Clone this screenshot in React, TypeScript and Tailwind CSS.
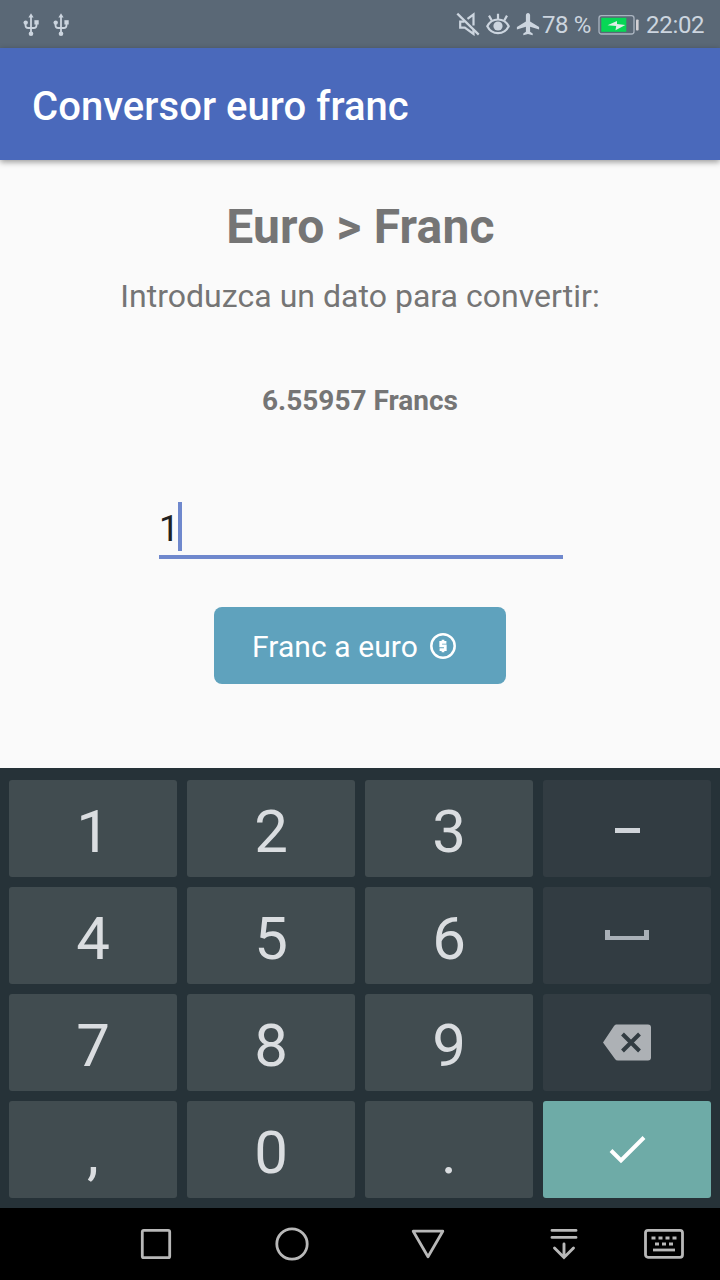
import React from 'react';
import { clsx } from 'clsx';

function UsbIcon() {
  return (
    <svg className="h-6 w-4" viewBox="0 0 16 24" fill="none" stroke="currentColor" strokeWidth="1.8">
      <path d="M8 4v16" />
      <path d="M2.500 11v2.200q0 2.800 2.800 2.800h5.400q2.800 0 2.800-2.800V11" />
      <path d="M8 1.200l2.600 4.400H5.400z" fill="currentColor" stroke="none" />
      <circle cx="2.700" cy="10.600" r="2.200" fill="currentColor" stroke="none" />
      <rect x="11.400" y="8.200" width="4.300" height="4.300" fill="currentColor" stroke="none" />
      <circle cx="8" cy="21.700" r="2.300" fill="currentColor" stroke="none" />
    </svg>
  );
}

function MuteIcon() {
  return (
    <svg className="h-6 w-6" viewBox="0 0 24 24" fill="none" stroke="currentColor" strokeWidth="2.2">
      <path d="M1.300 1.600l21.400 21" />
      <path d="M8.500 9.700H4.200v6h4.600l8.700 6.300v-4.600" />
      <path d="M11.500 6.800l6-4.300v11" />
    </svg>
  );
}

function EyeIcon() {
  return (
    <svg className="h-6 w-6" viewBox="0 0 24 24" fill="none" stroke="currentColor" strokeWidth="2.2">
      <path d="M1.300 14.300C3.500 9.800 7.500 7.500 12 7.500s8.500 2.300 10.700 6.800c-2.200 4.400-6.200 6.900-10.700 6.900S3.500 18.700 1.300 14.300z" />
      <circle cx="12" cy="14" r="4.600" fill="currentColor" stroke="none" />
      <path d="M12 1.700v5.300M3 3.600l2.600 4.600M21 3.600l-2.600 4.600" />
    </svg>
  );
}

function PlaneIcon() {
  return (
    <svg className="h-6 w-6" viewBox="0 0 24 24" fill="currentColor">
      <path d="M12 1c1.300 0 2.100 1 2.100 2.300v6.200l9 5.600v2.400l-9-2.800v5l2.600 1.900V23.300L12 22l-4.700 1.300v-1.700l2.600-1.900v-5l-9 2.800v-2.400l9-5.600V3.300C9.900 2 10.700 1 12 1z" />
    </svg>
  );
}

function BatteryIcon() {
  return (
    <svg className="h-6 w-[42px]" viewBox="0 0 42 24" fill="none">
      <rect x="1" y="3.600" width="35" height="18.400" rx="2.500" stroke="#aab4c0" strokeWidth="1.300" />
      <rect x="3.300" y="5.800" width="25" height="14" fill="#06d755" />
      <path d="M9.500 13.200L19 9v2.900l8.300 1.100-9.800 5.200.7-4.300z" fill="#dcefe6" />
      <rect x="38" y="7.500" width="2.600" height="11" rx="0.800" fill="#d3d0d4" />
    </svg>
  );
}

function StatusBar() {
  return (
    <div className="flex h-12 items-center bg-[#5a6876] text-[#ccd5df]">
      <div className="flex gap-3.5 pl-[23px]">
        <UsbIcon />
        <UsbIcon />
      </div>
      <div className="ml-auto flex items-center pr-[15px] text-2xl">
        <MuteIcon />
        <span className="ml-1.5 flex"><EyeIcon /></span>
        <span className="ml-1.5 flex"><PlaneIcon /></span>
        <span className="ml-0.5 w-[56px] pt-0.5 tracking-[-0.4px] whitespace-nowrap">78 %</span>
        <BatteryIcon />
        <span className="ml-1.5 w-[59px] pt-0.5 tracking-[-0.3px]">22:02</span>
      </div>
    </div>
  );
}

function DollarIcon() {
  return (
    <svg className="h-7 w-7" viewBox="0 0 28 28" fill="none" stroke="currentColor">
      <circle cx="14" cy="14" r="11.700" strokeWidth="2.500" />
      <path d="M17.400 10.400h-5.700v3.400h4.600v3.800h-5.700M14 7.700v2.700M14 17.600v2.700" strokeWidth="2.700" />
    </svg>
  );
}

function Converter() {
  return (
    <main className="flex h-[608px] flex-col items-center bg-[#fafafa] text-[#757575]">
      <h2 className="mt-[39px] ml-px text-5xl leading-[56px] font-bold tracking-[0.2px]">Euro &gt; Franc</h2>
      <p className="mt-[22px] text-[32px] leading-[38px] tracking-[0.03px]">Introduzca un dato para convertir:</p>
      <p className="mt-[70px] text-[28px] leading-8 font-bold">6.55957 Francs</p>
      <div className="mt-[85px] ml-0.5 flex h-[57px] w-[404px] items-start border-b-4 border-[#6f88cd] text-[36px] leading-[55px] text-[#212121]">
        <span className="w-[19px]">1</span>
        <span className="h-[49px] w-1 bg-[#6f88cd]" />
      </div>
      <button className="mt-12 flex h-[77px] w-[292px] items-center rounded-lg bg-[#5fa2bd] pl-[38px] text-[30px] text-white">
        <span className="pt-0.5 tracking-[0.08px]">Franc a euro</span>
        <span className="ml-[11px]"><DollarIcon /></span>
      </button>
    </main>
  );
}

function SpaceIcon() {
  return (
    <svg className="h-12 w-12 text-[#a9b0b7]" viewBox="0 0 48 48" fill="currentColor">
      <path d="M2 18h5v6h34v-6h5v10H2z" />
    </svg>
  );
}

function BackspaceIcon() {
  return (
    <svg className="h-12 w-12" viewBox="0 0 48 48">
      <path d="M13 5.500h32a3 3 0 0 1 3 3v30a3 3 0 0 1-3 3H15q-2 0-3-1.500L0 23.500 11 7q1-1.500 2-1.500z" fill="#adb1b5" />
      <path d="M19.500 15l17 17M36.500 15l-17 17" stroke="#323c42" strokeWidth="4" />
    </svg>
  );
}

function CheckIcon() {
  return (
    <svg className="h-12 w-12 text-white" viewBox="0 0 48 48" fill="none" stroke="currentColor" strokeWidth="4">
      <path d="M8 24.500l10 10 23-23" />
    </svg>
  );
}

interface KeyProps {
  label: string;
  children: React.ReactNode;
}

function Key({ label, children }: KeyProps) {
  const isAction = ['minus', 'space', 'delete'].includes(label);
  return (
    <button
      aria-label={label}
      className={clsx(
        'flex items-center justify-center rounded-[3px] text-6xl text-[#dadde0]',
        isAction && 'bg-[#323c42]',
        label === 'enter' && 'bg-[#6eaba7]',
        !isAction && label !== 'enter' && 'bg-[#414c50] pt-1.5',
      )}
    >
      {children}
    </button>
  );
}

const keys: KeyProps[] = [
  { label: '1', children: '1' },
  { label: '2', children: '2' },
  { label: '3', children: '3' },
  { label: 'minus', children: <span className="mt-1 h-[5px] w-[25px] bg-[#d0d4d9]" /> },
  { label: '4', children: '4' },
  { label: '5', children: '5' },
  { label: '6', children: '6' },
  { label: 'space', children: <SpaceIcon /> },
  { label: '7', children: '7' },
  { label: '8', children: '8' },
  { label: '9', children: '9' },
  { label: 'delete', children: <BackspaceIcon /> },
  { label: 'comma', children: ',' },
  { label: '0', children: '0' },
  { label: 'period', children: '.' },
  { label: 'enter', children: <CheckIcon /> },
];

function Keyboard() {
  return (
    <div className="grid h-[440px] grid-cols-4 grid-rows-4 gap-2.5 bg-[#263238] px-[9px] pt-3 pb-2.5">
      {keys.map((key) => (
        <Key key={key.label} label={key.label}>{key.children}</Key>
      ))}
    </div>
  );
}

function NavBar() {
  return (
    <nav className="flex h-[72px] items-center bg-black pl-[136px] text-[#b8b8b8]">
      <svg className="h-10 w-10" viewBox="0 0 40 40" fill="none" stroke="currentColor" strokeWidth="2.800">
        <rect x="6.300" y="6.300" width="27.400" height="27.400" rx="1.500" />
      </svg>
      <svg className="ml-24 h-10 w-10" viewBox="0 0 40 40" fill="none" stroke="currentColor" strokeWidth="2.800">
        <circle cx="20" cy="20" r="15.200" />
      </svg>
      <svg className="ml-24 h-10 w-10" viewBox="0 0 40 40" fill="none" stroke="currentColor" strokeWidth="2.800" strokeLinejoin="round">
        <path d="M5.200 7.200h29.600L20 32.800z" />
      </svg>
      <svg className="ml-24 h-10 w-10" viewBox="0 0 40 40" fill="none" stroke="currentColor" strokeWidth="2.900" strokeLinecap="round">
        <path d="M8 6.400h24M8 13.400h24" />
        <path d="M20 20v13M10.500 24l9.500 9.500 9.500-9.500" />
      </svg>
      <svg className="ml-[60px] h-10 w-10" viewBox="0 0 40 40" fill="none" stroke="currentColor" strokeWidth="2.800">
        <rect x="1.500" y="6.300" width="37" height="27" rx="2.500" />
        <path d="M7.500 14h25" strokeDasharray="4 3" strokeWidth="3" />
        <path d="M11 20h18" strokeDasharray="4 3" strokeWidth="3" />
        <path d="M9 26h22" />
      </svg>
    </nav>
  );
}

export default function App() {
  return (
    <div className="w-[720px] overflow-hidden font-[Roboto,sans-serif]">
      <StatusBar />
      <header className="relative flex h-28 items-center bg-[#4a69bb] pt-1.5 pl-8 shadow-[0_2px_6px_rgba(0,0,0,0.4)]">
        <h1 className="text-[40px] font-medium tracking-[0.05px] text-white">Conversor euro franc</h1>
      </header>
      <Converter />
      <Keyboard />
      <NavBar />
    </div>
  );
}
